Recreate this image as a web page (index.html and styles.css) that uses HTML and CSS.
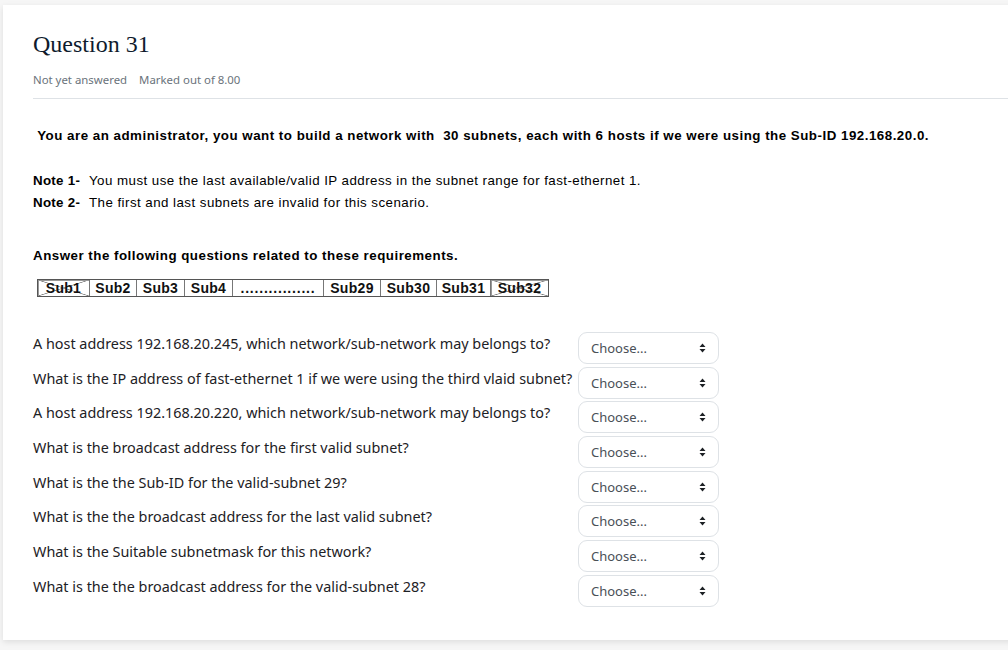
FILE: index.html
```html
<!DOCTYPE html>
<html>
<head>
<meta charset="utf-8">
<link rel="stylesheet" href="styles.css">
</head>
<body>
<div class="card">
  <h2 class="qtitle">Question 31</h2>
  <div class="meta"><span>Not yet answered</span><span>Marked out of 8.00</span></div>
  <div class="rule"></div>
  <p class="lead">&nbsp;You are an administrator, you want to build a network with &nbsp;30 subnets, each with 6 hosts if we were using the Sub-ID 192.168.20.0.</p>
  <div class="notes">
    <div class="note"><b>Note 1-</b><span>You must use the last available/valid IP address in the subnet range for fast-ethernet 1.</span></div>
    <div class="note"><b>Note 2-</b><span>The first and last subnets are invalid for this scenario.</span></div>
  </div>
  <p class="answer">Answer the following questions related to these requirements.</p>
  <div class="strip">
    <div class="cell w1 crossed">Sub1</div>
    <div class="cell w2">Sub2</div>
    <div class="cell w3">Sub3</div>
    <div class="cell w4">Sub4</div>
    <div class="cell w5">................</div>
    <div class="cell w6">Sub29</div>
    <div class="cell w7">Sub30</div>
    <div class="cell w8">Sub31</div>
    <div class="cell w9 crossed last">Sub32</div>
  </div>
  <div class="qgrid">
    <div class="qlabel">A host address 192.168.20.245, which network/sub-network may belongs to?</div>
    <div class="sel"><span>Choose...</span><svg width="7" height="10" viewBox="0 0 7 10"><path d="M3.5 0.5 L6.5 4 L0.5 4 Z M3.5 9.5 L6.5 6 L0.5 6 Z" fill="#1d2125"/></svg></div>
    <div class="qlabel">What is the IP address of fast-ethernet 1 if we were using the third vlaid subnet?</div>
    <div class="sel"><span>Choose...</span><svg width="7" height="10" viewBox="0 0 7 10"><path d="M3.5 0.5 L6.5 4 L0.5 4 Z M3.5 9.5 L6.5 6 L0.5 6 Z" fill="#1d2125"/></svg></div>
    <div class="qlabel">A host address 192.168.20.220, which network/sub-network may belongs to?</div>
    <div class="sel"><span>Choose...</span><svg width="7" height="10" viewBox="0 0 7 10"><path d="M3.5 0.5 L6.5 4 L0.5 4 Z M3.5 9.5 L6.5 6 L0.5 6 Z" fill="#1d2125"/></svg></div>
    <div class="qlabel">What is the broadcast address for the first valid subnet?</div>
    <div class="sel"><span>Choose...</span><svg width="7" height="10" viewBox="0 0 7 10"><path d="M3.5 0.5 L6.5 4 L0.5 4 Z M3.5 9.5 L6.5 6 L0.5 6 Z" fill="#1d2125"/></svg></div>
    <div class="qlabel">What is the the Sub-ID for the valid-subnet 29?</div>
    <div class="sel"><span>Choose...</span><svg width="7" height="10" viewBox="0 0 7 10"><path d="M3.5 0.5 L6.5 4 L0.5 4 Z M3.5 9.5 L6.5 6 L0.5 6 Z" fill="#1d2125"/></svg></div>
    <div class="qlabel">What is the the broadcast address for the last valid subnet?</div>
    <div class="sel"><span>Choose...</span><svg width="7" height="10" viewBox="0 0 7 10"><path d="M3.5 0.5 L6.5 4 L0.5 4 Z M3.5 9.5 L6.5 6 L0.5 6 Z" fill="#1d2125"/></svg></div>
    <div class="qlabel">What is the Suitable subnetmask for this network?</div>
    <div class="sel"><span>Choose...</span><svg width="7" height="10" viewBox="0 0 7 10"><path d="M3.5 0.5 L6.5 4 L0.5 4 Z M3.5 9.5 L6.5 6 L0.5 6 Z" fill="#1d2125"/></svg></div>
    <div class="qlabel">What is the the broadcast address for the valid-subnet 28?</div>
    <div class="sel"><span>Choose...</span><svg width="7" height="10" viewBox="0 0 7 10"><path d="M3.5 0.5 L6.5 4 L0.5 4 Z M3.5 9.5 L6.5 6 L0.5 6 Z" fill="#1d2125"/></svg></div>
  </div>
</div>
</body>
</html>
```
FILE: styles.css
```css
html, body {
  margin: 0;
  padding: 0;
  background: #f6f6f6;
  overflow: hidden;
}
body {
  width: 1008px;
  height: 650px;
}
.card {
  margin: 5px 0 0 3px;
  width: 1060px;
  background: #fff;
  box-shadow: 0 2px 6px rgba(0,0,0,0.10);
  padding: 25px 30px 33px 30px;
  box-sizing: border-box;
  font-family: "Noto Sans", "Open Sans", sans-serif;
  color: #1d2125;
}
.qtitle {
  margin: 0;
  font-family: "Liberation Serif", serif;
  font-weight: normal;
  font-size: 24px;
  line-height: 29px;
  color: #0f1b2d;
}
.meta {
  margin-top: 13px;
  font-size: 11.4px;
  line-height: 16px;
  color: #6a737b;
  display: flex;
  gap: 12px;
}
.rule {
  margin-top: 10px;
  border-top: 1px solid #dee2e6;
}
.lead, .answer {
  margin: 0;
  font-family: "Liberation Sans", Arial, sans-serif;
  font-weight: bold;
  font-size: 13.33px;
  line-height: 16px;
  color: #000;
}
.lead {
  margin-top: 29px;
  letter-spacing: 0.5px;
}
.notes {
  margin-top: 26px;
  font-family: "Liberation Sans", Arial, sans-serif;
  font-size: 13.33px;
  line-height: 22px;
  color: #000;
}
.note {
  display: flex;
}
.note b {
  width: 56px;
  flex: none;
  letter-spacing: 0.3px;
}
.note span {
  letter-spacing: 0.45px;
}
.answer {
  margin-top: 34px;
  letter-spacing: 0.5px;
}
.strip {
  margin-top: 15px;
  margin-left: 4px;
  display: flex;
  width: max-content;
  border: 1px solid #555;
  height: 18px;
  box-sizing: border-box;
  font-family: "Liberation Sans", Arial, sans-serif;
  font-weight: bold;
  font-size: 14px;
  letter-spacing: 0.3px;
  line-height: 16px;
  color: #111;
}
.cell {
  border-right: 1px solid #777;
  text-align: center;
  box-sizing: border-box;
}
.cell.last { border-right: none; }
.w1 { width: 52px; }
.w2 { width: 47px; }
.w3 { width: 48px; }
.w4 { width: 48px; }
.w5 { width: 91px; letter-spacing: 0.8px; }
.w6 { width: 57px; }
.w7 { width: 56px; }
.w8 { width: 54px; }
.w9 { width: 57px; }
.crossed {
  background:
    linear-gradient(to top right, transparent calc(50% - 0.7px), #7a7a7a 50%, transparent calc(50% + 0.7px)),
    linear-gradient(to bottom right, transparent calc(50% - 0.7px), #7a7a7a 50%, transparent calc(50% + 0.7px));
  box-shadow: inset 1px 1px 0 #999;
}
.qgrid {
  margin-top: 35px;
  display: grid;
  grid-template-columns: 545px 141px;
  row-gap: 2.7px;
}
.qlabel {
  padding-top: 2px;
  font-size: 14.4px;
  line-height: 20px;
  white-space: nowrap;
}
.sel {
  height: 32px;
  box-sizing: border-box;
  border: 1px solid #dee2e6;
  border-radius: 9px;
  display: flex;
  align-items: center;
  justify-content: space-between;
  padding: 0 12px 0 12px;
  font-size: 13px;
  color: #495057;
}
.sel svg { display: block; }
```
